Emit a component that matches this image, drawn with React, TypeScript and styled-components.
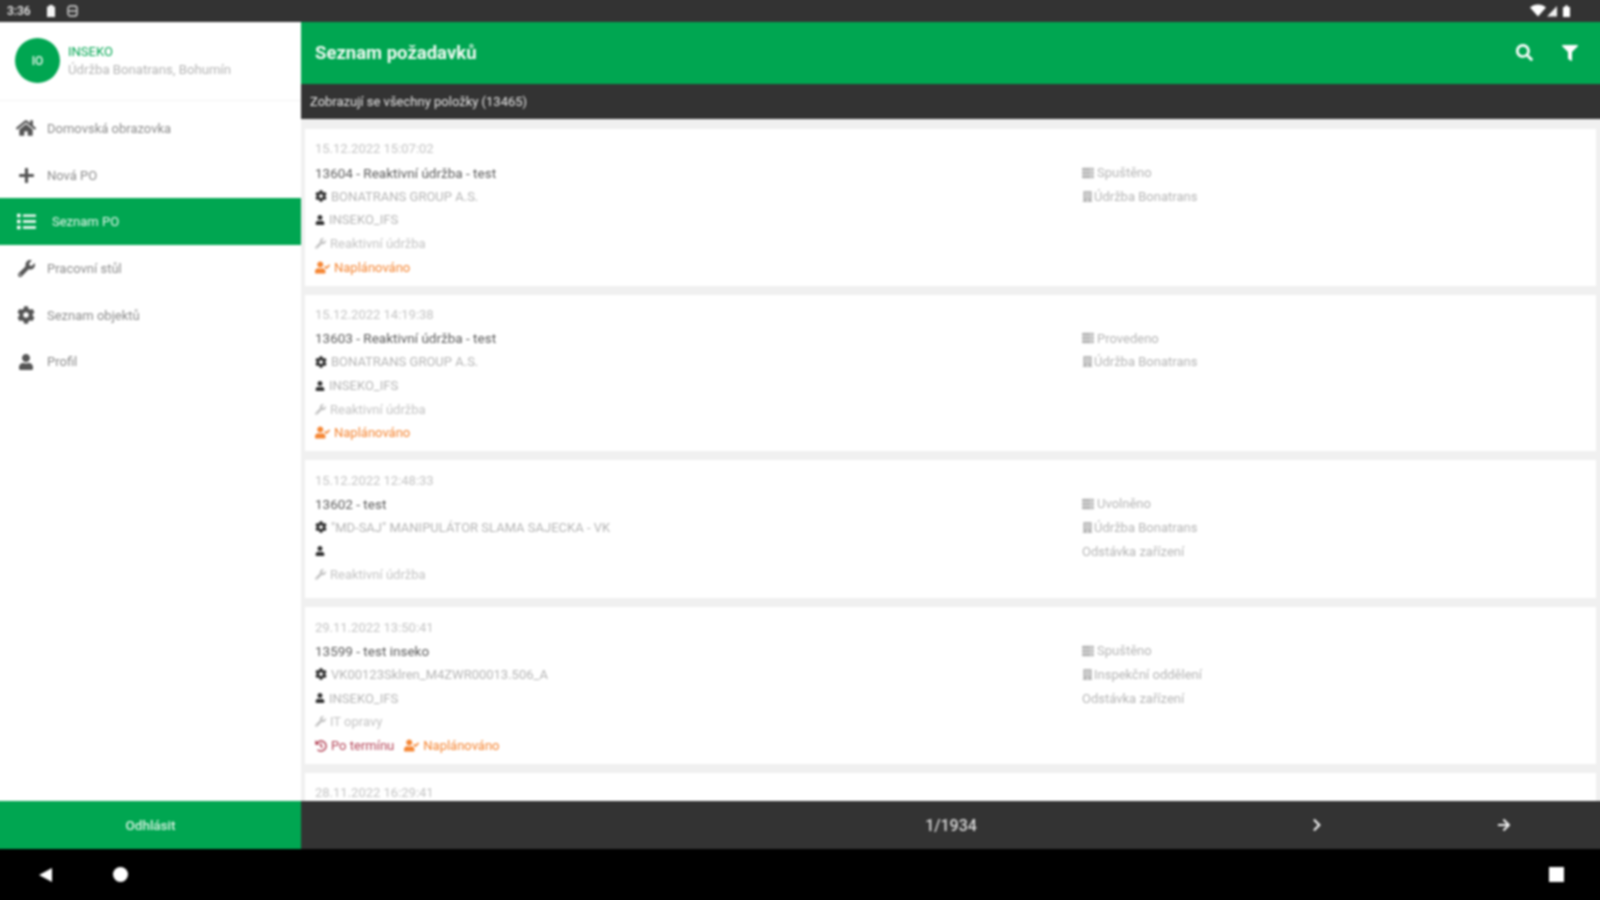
import React from 'react'
import styled, { createGlobalStyle } from 'styled-components'
import {
  FaArrowRight,
  FaBuilding,
  FaChevronRight,
  FaCog,
  FaFilter,
  FaHistory,
  FaHome,
  FaList,
  FaPlus,
  FaSearch,
  FaServer,
  FaUser,
  FaUserCheck,
  FaWrench,
} from 'react-icons/fa'

const GREEN = '#00a651'

interface Order {
  date: string
  title: string
  asset: string
  user: string
  kind: string
  status: string
  dept: string
  outage?: boolean
  late?: boolean
  planned?: boolean
}

const orders: Order[] = [
  {
    date: '15.12.2022 15:07:02',
    title: '13604 - Reaktivní údržba - test',
    asset: 'BONATRANS GROUP A.S.',
    user: 'INSEKO_IFS',
    kind: 'Reaktivní údržba',
    status: 'Spuštěno',
    dept: 'Údržba Bonatrans',
    planned: true,
  },
  {
    date: '15.12.2022 14:19:38',
    title: '13603 - Reaktivní údržba - test',
    asset: 'BONATRANS GROUP A.S.',
    user: 'INSEKO_IFS',
    kind: 'Reaktivní údržba',
    status: 'Provedeno',
    dept: 'Údržba Bonatrans',
    planned: true,
  },
  {
    date: '15.12.2022 12:48:33',
    title: '13602 - test',
    asset: '"MD-SAJ" MANIPULÁTOR SLAMA SAJECKA - VK',
    user: '',
    kind: 'Reaktivní údržba',
    status: 'Uvolněno',
    dept: 'Údržba Bonatrans',
    outage: true,
  },
  {
    date: '29.11.2022 13:50:41',
    title: '13599 - test inseko',
    asset: 'VK00123Sklren_M4ZWR00013.506_A',
    user: 'INSEKO_IFS',
    kind: 'IT opravy',
    status: 'Spuštěno',
    dept: 'Inspekční oddělení',
    outage: true,
    late: true,
    planned: true,
  },
]

const menu = [
  { label: 'Domovská obrazovka', icon: <FaHome size={20} /> },
  { label: 'Nová PO', icon: <FaPlus size={17} /> },
  { label: 'Seznam PO', icon: <FaList size={19} />, active: true },
  { label: 'Pracovní stůl', icon: <FaWrench size={17} /> },
  { label: 'Seznam objektů', icon: <FaCog size={18} /> },
  { label: 'Profil', icon: <FaUser size={16} /> },
]

export default function App() {
  return (
    <Viewport>
      <GlobalStyle />
      <Screen>
        <StatusBar>
          <StatusGroup>
            <StatusTime>3:36</StatusTime>
            <svg width="10" height="12" viewBox="0 0 10 12">
              <path d="M3 0h4v1.5h2V12H1V1.5h2z" fill="#f4f4f4" />
            </svg>
            <svg width="11" height="12" viewBox="0 0 11 12">
              <rect x="1" y="1" width="9" height="10" rx="2.5" fill="none" stroke="#d8d8d8" strokeWidth="1.4" />
              <path d="M1.5 6h8" stroke="#d8d8d8" strokeWidth="1.4" />
            </svg>
          </StatusGroup>
          <StatusGroup>
            <svg width="44" height="14" viewBox="0 0 44 14">
              <path d="M0 3.5C4-.6 12-.6 16 3.5L8 12.5z" fill="#fff" />
              <path d="M17 12.5L27 2v10.5z" fill="#f0f0f0" />
              <path d="M33 3h2V1.500h3V3h2v10h-7z" fill="#fff" />
            </svg>
          </StatusGroup>
        </StatusBar>

        <Body>
          <Sidebar>
            <Profile>
              <Avatar>IO</Avatar>
              <ProfileText>
                <ProfileName>INSEKO</ProfileName>
                <ProfileOrg>Údržba Bonatrans, Bohumín</ProfileOrg>
              </ProfileText>
            </Profile>
            <Menu>
              {menu.map((item) => (
                <MenuItem key={item.label} $active={item.active}>
                  <MenuIcon>{item.icon}</MenuIcon>
                  <MenuLabel $active={item.active}>{item.label}</MenuLabel>
                </MenuItem>
              ))}
            </Menu>
            <LogoutBar>Odhlásit</LogoutBar>
          </Sidebar>

          <Main>
            <TopBar>
              <TopTitle>Seznam požadavků</TopTitle>
              <TopActions>
                <FaSearch size={17} />
                <FaFilter size={16} />
              </TopActions>
            </TopBar>
            <InfoBar>Zobrazují se všechny položky (13465)</InfoBar>
            <List>
              {orders.map((order) => (
                <Card key={order.date}>
                  <CardLeft>
                    <DateRow>{order.date}</DateRow>
                    <TitleRow>{order.title}</TitleRow>
                    <Row>
                      <DarkIcon>
                        <FaCog size={12} />
                      </DarkIcon>
                      {order.asset}
                    </Row>
                    <Row>
                      <DarkIcon>
                        <FaUser size={10} />
                      </DarkIcon>
                      {order.user}
                    </Row>
                    <KindRow>
                      <FaWrench size={11} />
                      {order.kind}
                    </KindRow>
                    {(order.late || order.planned) && (
                      <FlagRow>
                        {order.late && (
                          <LateFlag>
                            <FaHistory size={12} />
                            Po termínu
                          </LateFlag>
                        )}
                        {order.planned && (
                          <PlannedFlag>
                            <FaUserCheck size={15} />
                            Naplánováno
                          </PlannedFlag>
                        )}
                      </FlagRow>
                    )}
                  </CardLeft>
                  <CardRight>
                    <StatusRow>
                      <FaServer size={12} />
                      {order.status}
                    </StatusRow>
                    <DeptRow>
                      <FaBuilding size={11} />
                      {order.dept}
                    </DeptRow>
                    {order.outage && <Row>Odstávka zařízení</Row>}
                  </CardRight>
                </Card>
              ))}
              <Card>
                <DateRow>28.11.2022 16:29:41</DateRow>
              </Card>
            </List>
            <Pager>
              <PagerCount>1/1934</PagerCount>
              <PagerButton>
                <FaChevronRight size={14} />
              </PagerButton>
              <PagerButton>
                <FaArrowRight size={14} />
              </PagerButton>
            </Pager>
          </Main>
        </Body>

        <NavBar>
          <NavSide>
            <svg width="16" height="16" viewBox="0 0 16 16">
              <path d="M15 1v14L2 8z" fill="#fff" />
            </svg>
            <NavDot />
          </NavSide>
          <NavSquare />
        </NavBar>
      </Screen>
    </Viewport>
  )
}

const GlobalStyle = createGlobalStyle`
  html, body {
    margin: 0;
    padding: 0;
    background: #000;
  }
  * {
    box-sizing: border-box;
  }
`
const Viewport = styled.div`
  width: 1600px;
  height: 900px;
  overflow: hidden;
`
// 4px bigger on every side, clipped by Viewport, so the blur doesn't darken the page edges
const Screen = styled.div`
  width: 1608px;
  height: 908px;
  margin: -4px;
  display: flex;
  flex-direction: column;
  font-family: Roboto, 'Liberation Sans', sans-serif;
  filter: blur(0.85px);
`
const StatusBar = styled.div`
  height: 26px;
  flex: none;
  display: flex;
  align-items: center;
  justify-content: space-between;
  padding: 4px 30px 0 11px;
  background: #333;
  color: #eee;
`
const StatusGroup = styled.div`
  display: flex;
  align-items: center;
  gap: 11px;
`
const StatusTime = styled.span`
  width: 28px;
  font-size: 12px;
  font-weight: 500;
`
const Body = styled.div`
  flex: 1;
  min-height: 0;
  display: grid;
  grid-template-columns: 305px 1fr;
`
const Sidebar = styled.aside`
  display: flex;
  flex-direction: column;
  min-height: 0;
  background: #fff;
`
const Profile = styled.div`
  height: 79px;
  flex: none;
  display: flex;
  align-items: center;
  gap: 8px;
  padding: 0 0 1px 19px;
  border-bottom: 1px solid #f4f4f4;
`
const Avatar = styled.div`
  width: 45px;
  height: 45px;
  border-radius: 50%;
  display: flex;
  align-items: center;
  justify-content: center;
  background: ${GREEN};
  color: #e4f5ea;
  font-size: 12px;
  font-weight: 500;
`
const ProfileText = styled.div`
  display: flex;
  flex-direction: column;
  gap: 3px;
`
const ProfileName = styled.div`
  color: ${GREEN};
  font-size: 13px;
`
const ProfileOrg = styled.div`
  color: #b4b4b4;
  font-size: 13.2px;
`
const Menu = styled.nav`
  flex: 1;
  padding-top: 4px;
`
const MenuItem = styled.div<{ $active?: boolean }>`
  height: 46.7px;
  display: flex;
  align-items: center;
  padding-left: 20px;
  background: ${(p) => (p.$active ? GREEN : 'transparent')};
  color: ${(p) => (p.$active ? '#fff' : '#555')};
`
const MenuIcon = styled.span`
  width: 20px;
  display: flex;
  justify-content: center;
`
const MenuLabel = styled.span<{ $active?: boolean }>`
  margin-left: ${(p) => (p.$active ? '16px' : '11px')};
  color: ${(p) => (p.$active ? '#e8f7ee' : '#8c8c8c')};
  font-size: 13px;
`
const LogoutBar = styled.div`
  height: 48px;
  flex: none;
  display: flex;
  align-items: center;
  justify-content: center;
  padding-left: 4px;
  background: ${GREEN};
  color: #d9f2e2;
  font-size: 13.5px;
  font-weight: 500;
`
const Main = styled.main`
  display: flex;
  flex-direction: column;
  min-width: 0;
  min-height: 0;
  background: #f0f0f0;
`
const TopBar = styled.div`
  height: 62px;
  flex: none;
  display: flex;
  align-items: center;
  justify-content: space-between;
  padding: 0 26px 1px 14px;
  background: ${GREEN};
  color: #fff;
`
const TopTitle = styled.div`
  font-size: 18.5px;
  font-weight: 700;
  color: #eefaf2;
`
const TopActions = styled.div`
  display: flex;
  align-items: center;
  gap: 29px;
`
const InfoBar = styled.div`
  height: 35px;
  flex: none;
  display: flex;
  align-items: center;
  padding-left: 9px;
  background: #333;
  color: #e4e4e4;
  font-size: 13px;
`
const List = styled.div`
  flex: 1;
  min-height: 0;
  overflow: hidden;
  display: flex;
  flex-direction: column;
  gap: 9px;
  padding: 10px 8px 0 4px;
`
const Card = styled.article`
  flex: none;
  display: grid;
  grid-template-columns: 767px 1fr;
  min-height: 138px;
  padding: 8px 10px 6.5px 10px;
  background: #fff;
`
const CardLeft = styled.div`
  display: flex;
  flex-direction: column;
`
const CardRight = styled.div`
  display: flex;
  flex-direction: column;
  padding-top: 23.7px;
`
const Row = styled.div`
  height: 23.7px;
  display: flex;
  align-items: center;
  gap: 4px;
  color: #b5b5b5;
  font-size: 13px;
  white-space: nowrap;
`
const DateRow = styled(Row)`
  color: #c4c4c4;
`
const TitleRow = styled(Row)`
  color: #5c5c5c;
  font-size: 13.5px;
`
const DarkIcon = styled.span`
  display: flex;
  color: #333;
`
const KindRow = styled(Row)`
  color: #c4c4c4;
`
const FlagRow = styled(Row)`
  gap: 10px;
`
const StatusRow = styled(Row)`
  gap: 3px;
`
const DeptRow = styled(Row)`
  gap: 1px;
`
const LateFlag = styled.span`
  display: flex;
  align-items: center;
  gap: 4px;
  color: #b5475a;
`
const PlannedFlag = styled.span`
  display: flex;
  align-items: center;
  gap: 4px;
  color: #f58634;
`
const Pager = styled.div`
  height: 48px;
  flex: none;
  display: grid;
  grid-template-columns: 1fr 187px 187px;
  align-items: center;
  padding-right: 7px;
  background: #333;
  color: #eee;
`
const PagerCount = styled.div`
  padding-left: 378px;
  text-align: center;
  font-size: 16px;
  font-weight: 500;
  color: #d8d8d8;
  white-space: nowrap;
`
const PagerButton = styled.div`
  display: flex;
  justify-content: center;
`
const NavBar = styled.div`
  height: 55px;
  flex: none;
  display: flex;
  align-items: center;
  justify-content: space-between;
  padding: 0 40px 4px 41px;
  background: #000;
`
const NavSide = styled.div`
  display: flex;
  align-items: center;
  gap: 60px;
`
const NavDot = styled.div`
  width: 15px;
  height: 15px;
  border-radius: 50%;
  background: #fff;
`
const NavSquare = styled.div`
  width: 15px;
  height: 15px;
  background: #fff;
`
